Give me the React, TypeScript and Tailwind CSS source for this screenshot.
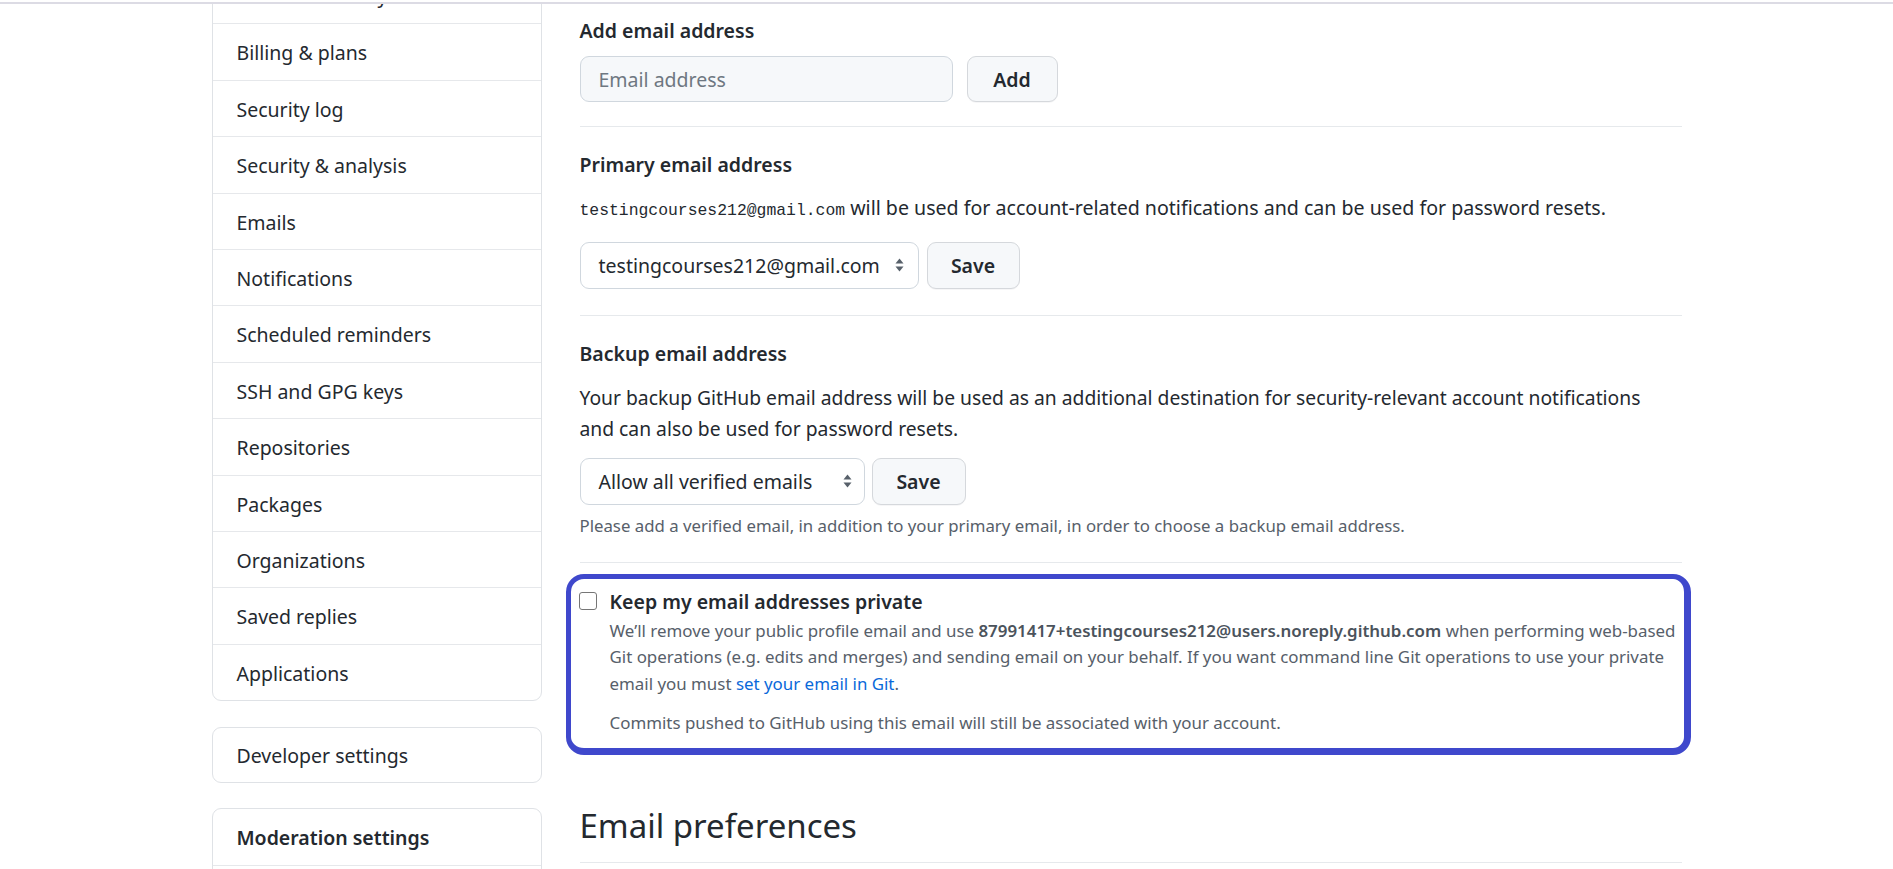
import React from "react";

function Arrows() {
  return (
    <svg width="9" height="14" viewBox="0 0 9 14" fill="#57606a" aria-hidden="true">
      <path d="M0.5 5.5 L4.5 0.5 L8.5 5.5 Z" />
      <path d="M0.5 8.5 L4.5 13.5 L8.5 8.5 Z" />
    </svg>
  );
}

const sideItems = [
  "Account security",
  "Billing & plans",
  "Security log",
  "Security & analysis",
  "Emails",
  "Notifications",
  "Scheduled reminders",
  "SSH and GPG keys",
  "Repositories",
  "Packages",
  "Organizations",
  "Saved replies",
  "Applications",
];

function SaveButton({ w }: { w: string }) {
  return (
    <div
      className={`${w} h-[47px] rounded-[9px] border border-[#d5d8dc] bg-[#f6f8fa] shadow-[0_1px_0_rgba(31,35,40,0.04)] flex items-center justify-center text-[19.5px] font-semibold text-[#24292f]`}
    >
      Save
    </div>
  );
}

export default function App() {
  return (
    <div className="relative h-[869px] overflow-hidden bg-white text-[#24292f] font-['Segoe_UI','Noto_Sans',sans-serif]">
      <div className="absolute top-0 left-0 right-0 h-[4px] bg-white border-b-2 border-[#dcdbe4] z-10" />
      <div className="mx-auto w-[1470px] flex gap-[38px]">
        <aside className="w-[330px] shrink-0 mt-[-34.1px]">
          <nav className="border border-[#dfe2e6] rounded-[9px] bg-white">
            {sideItems.map((t, i) => (
              <div
                key={t}
                className={
                  i > 0
                    ? "h-[56.42px] flex items-center pl-[24px] pt-[2px] text-[19.5px] border-t border-[#e6e8eb]"
                    : "h-[56.42px] flex items-center pl-[24px] pt-[2px] text-[19.5px]"
                }
              >
                {t}
              </div>
            ))}
          </nav>
          <div className="mt-[25.5px] border border-[#dfe2e6] rounded-[9px] bg-white">
            <div className="h-[54.4px] flex items-center pl-[24px] pt-[2px] text-[19.5px]">Developer settings</div>
          </div>
          <div className="mt-[25px] border border-[#dfe2e6] rounded-[9px] bg-white">
            <div className="h-[57px] flex items-center pl-[24px] pt-[2px] text-[19.5px] font-semibold border-b border-[#e6e8eb]">
              Moderation settings
            </div>
            <div className="h-[56.42px]" />
          </div>
        </aside>

        <main className="w-[1102px] shrink-0 pt-[15.3px]">
          <h3 className="text-[19.5px] font-semibold leading-[31.5px]">Add email address</h3>
          <div className="flex mt-[9px]">
            <div className="w-[373px] h-[46px] rounded-[9px] border border-[#d0d7de] bg-[#f6f8fa] flex items-center pl-[18px] pt-[1px] text-[19.5px] text-[#6e7781]">
              Email address
            </div>
            <div className="ml-[14px] w-[91px] h-[46px] rounded-[9px] border border-[#d5d8dc] bg-[#f6f8fa] shadow-[0_1px_0_rgba(31,35,40,0.04)] flex items-center justify-center pt-[1px] text-[19.5px] font-semibold">
              Add
            </div>
          </div>

          <div className="mt-[24px] h-px bg-[#e6e9ec]" />

          <h3 className="mt-[22px] text-[19.5px] font-semibold leading-[31.5px]">Primary email address</h3>
          <p className="mt-[11.5px] text-[19.6px] leading-[31.5px] whitespace-nowrap">
            <code className="font-['Liberation_Mono',monospace] text-[16.4px]">testingcourses212@gmail.com</code> will be
            used for account-related notifications and can be used for password resets.
          </p>
          <div className="flex mt-[15.5px]">
            <div className="w-[339px] h-[47px] rounded-[9px] border border-[#d0d7de] bg-white flex items-center justify-between pl-[18px] pr-[14px] text-[19.5px]">
              <span>testingcourses212@gmail.com</span>
              <Arrows />
            </div>
            <div className="ml-[8px]">
              <SaveButton w="w-[93px]" />
            </div>
          </div>

          <div className="mt-[26px] h-px bg-[#e6e9ec]" />

          <h3 className="mt-[22px] text-[19.5px] font-semibold leading-[31.5px]">Backup email address</h3>
          <p className="mt-[12.5px] text-[19.3px] leading-[31.5px] whitespace-nowrap">
            Your backup GitHub email address will be used as an additional destination for security-relevant account
            notifications
            <br />
            and can also be used for password resets.
          </p>
          <div className="flex mt-[13px]">
            <div className="w-[285px] h-[47px] rounded-[9px] border border-[#d0d7de] bg-white flex items-center justify-between pl-[18px] pr-[12px] text-[19.5px]">
              <span>Allow all verified emails</span>
              <Arrows />
            </div>
            <div className="ml-[7px]">
              <SaveButton w="w-[94px]" />
            </div>
          </div>
          <p className="mt-[7px] text-[16.8px] leading-[27px] text-[#57606a] whitespace-nowrap">
            Please add a verified email, in addition to your primary email, in order to choose a backup email address.
          </p>

          <div className="mt-[23px] h-px bg-[#e6e9ec]" />

          <div className="relative mt-[23.5px]">
            <div className="absolute left-[-13.3px] top-[-12px] right-[-9px] bottom-[-18.5px] border-l-[5px] border-t-[5px] border-r-[7px] border-b-[7px] border-[#3f48cc] rounded-[18px] pointer-events-none" />
            <div className="flex">
              <div className="w-[30px] shrink-0">
                <div className="mt-[5.25px] ml-[-1px] w-[18px] h-[18px] rounded-[3px] border-[1.5px] border-[#767676] bg-white" />
              </div>
              <div>
                <div className="text-[19.5px] font-semibold leading-[31.5px]">Keep my email addresses private</div>
                <p className="text-[16.9px] leading-[26.5px] text-[#57606a] whitespace-nowrap">
                  We’ll remove your public profile email and use{" "}
                  <strong className="font-semibold text-[#4b535c]">
                    87991417+testingcourses212@users.noreply.github.com
                  </strong>{" "}
                  when performing web-based
                  <br />
                  Git operations (e.g. edits and merges) and sending email on your behalf. If you want command line Git
                  operations to use your private
                  <br />
                  email you must <span className="text-[#0969da]">set your email in Git</span>.
                </p>
                <p className="mt-[13px] text-[16.9px] leading-[26.5px] text-[#57606a] whitespace-nowrap">
                  Commits pushed to GitHub using this email will still be associated with your account.
                </p>
              </div>
            </div>
          </div>

          <h2 className="mt-[63px] text-[33px] font-normal leading-[51px]">Email preferences</h2>
          <div className="mt-[11.5px] h-px bg-[#e6e9ec]" />
        </main>
      </div>
    </div>
  );
}
